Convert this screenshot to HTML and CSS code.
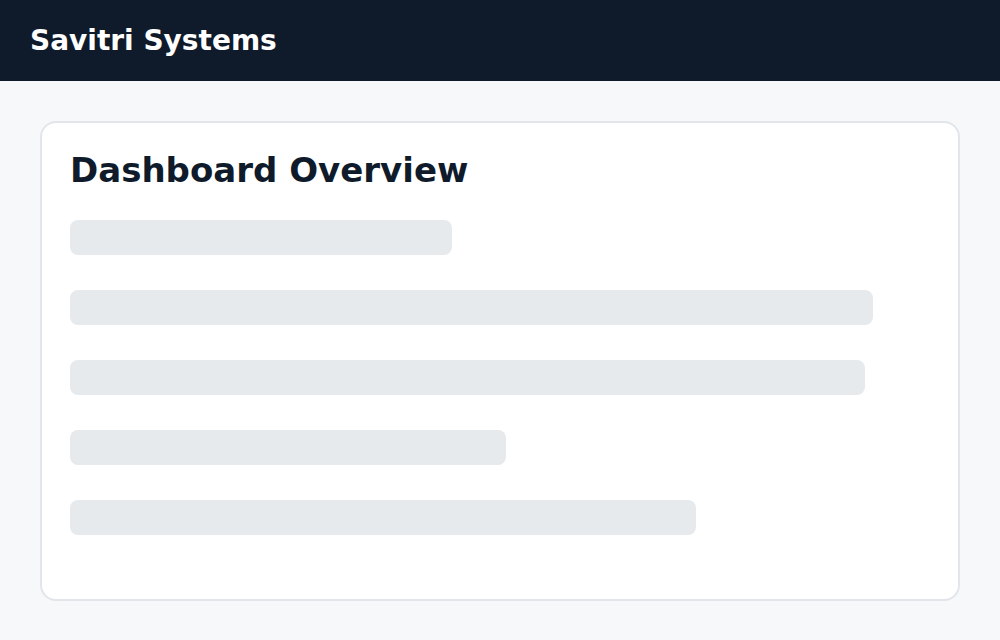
FILE: index.html
```html
<!DOCTYPE html>
<html lang="en">
<head>
    <meta charset="UTF-8">
    <meta name="viewport" content="width=device-width, initial-scale=1.0">
    <title>Savitri Systems</title>
    <link rel="stylesheet" href="styles.css">
</head>
<body>
    <div class="header">
        <h1>Savitri Systems</h1>
    </div>

    <div class="main">
        <div class="card">
            <h2>Dashboard Overview</h2>
            <div class="skeleton" style="width: 382px;"></div>
            <div class="skeleton" style="width: 803px;"></div>
            <div class="skeleton" style="width: 795px;"></div>
            <div class="skeleton" style="width: 436px;"></div>
            <div class="skeleton" style="width: 626px;"></div>
        </div>
    </div>
</body>
</html>
```

FILE: styles.css
```css
:root {
    --navy: #0f1b2b;
    --background-color: #f7f8fa;
    --card-color: #ffffff;
    --border-color: #e2e5e9;
    --skeleton-color: #e7eaed;
}

* {
    margin: 0;
    padding: 0;
    box-sizing: border-box;
}

body {
    font-family: 'DejaVu Sans', Verdana, sans-serif;
    background-color: var(--background-color);
    color: var(--navy);
    min-height: 100vh;
}

.header {
    height: 81px;
    background-color: var(--navy);
    display: flex;
    align-items: center;
    padding: 0 30px;
}

.header h1 {
    font-size: 28px;
    font-weight: bold;
    color: #ffffff;
}

.main {
    padding: 40px;
}

.card {
    background-color: var(--card-color);
    border: 2px solid var(--border-color);
    border-radius: 16px;
    padding: 27px 28px 29px;
}

.card h2 {
    font-size: 34px;
    font-weight: bold;
    margin-bottom: 30px;
}

.skeleton {
    height: 35px;
    max-width: 100%;
    background-color: var(--skeleton-color);
    border-radius: 8px;
    margin-bottom: 35px;
}
```
